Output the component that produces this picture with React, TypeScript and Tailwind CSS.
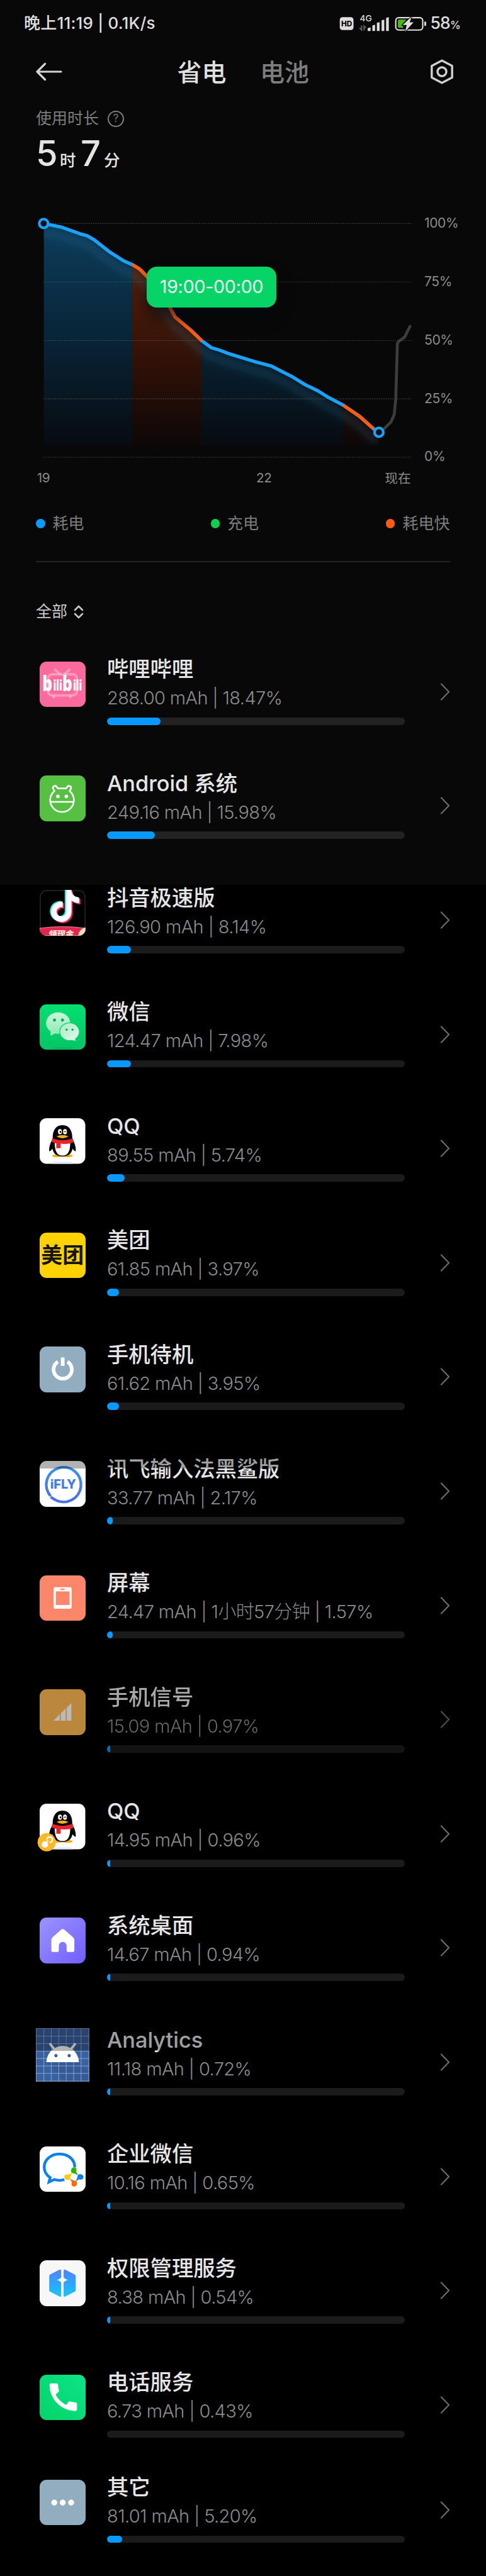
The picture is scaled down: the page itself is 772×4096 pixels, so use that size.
import React from "react";
import { FaTiktok } from "react-icons/fa6";

type AppItem = {
    name: string;
    usage: string;
    percent: number;
    icon: React.ReactNode;
    track?: string;
    dimmed?: boolean;
    shade?: string;
    rowHeight?: string;
};

const tile = "h-[72.5px] w-[72.5px] overflow-hidden rounded-[11px]";

function BilibiliIcon() {
    return (
        <svg viewBox="0 0 100 100" className={`${tile} bg-[#fb6a9d]`}>
            <g stroke="#fff" strokeOpacity="0.32" strokeWidth="5.5" fill="none" strokeLinecap="round">
                <rect x="18.5" y="28" width="63" height="46" rx="9" />
                <path d="M34 18l9 8M65 18l-9 8M31 77v1M67 77v1" />
            </g>
            <g fill="#fff" fontFamily="Open Sans" fontWeight="800">
                <text transform="translate(6 64.5) scale(0.74 1)" fontSize="46">b</text>
                <text transform="translate(29.5 63) scale(0.66 1)" fontSize="31">ili</text>
                <text transform="translate(49.5 64.5) scale(0.74 1)" fontSize="46">b</text>
                <text transform="translate(73 63) scale(0.66 1)" fontSize="31">ili</text>
            </g>
        </svg>
    );
}

function AndroidIcon() {
    return (
        <svg viewBox="0 0 100 100" className={`${tile} bg-[#55c041]`}>
            <path
                d="M32.4 34L29.5 29.5Q28 24.5 32.5 23Q37 22 38.5 27L40 28.5H58L59.5 27Q61 22 65.5 23Q70 24.5 68.5 29.5L65.6 34A26 26 0 1 1 32.4 34ZM23.5 58H74.5"
                fill="none"
                stroke="#fff"
                strokeWidth="3.6"
                strokeLinejoin="round"
            />
            <circle cx="40" cy="46" r="4" fill="#fff" />
            <circle cx="58.5" cy="46" r="4" fill="#fff" />
        </svg>
    );
}

function DouyinIcon() {
    return (
        <div className={`${tile} relative bg-black ring-2 ring-inset ring-[#1e1e1e]`}>
            <FaTiktok className="absolute -top-px left-[13px] text-[#25e6e0]" size={51} />
            <FaTiktok className="absolute top-[2px] left-[17px] text-[#f8245c]" size={51} />
            <FaTiktok className="absolute top-0 left-[15px] text-white" size={51} />
            <svg viewBox="0 0 100 100" className="absolute inset-0 h-full w-full">
                <path d="M0 84Q50 77 100 84V100H0Z" fill="#e9234f" stroke="#f7c9b4" strokeWidth="1" />
                <path d="M84 100Q86 87 100 82V92Q94 99 90 100Z" fill="#fbe0b0" />
                <text x="19" y="103" fontSize="18.5" fontWeight="900" fontFamily="Noto Sans CJK SC" fill="#ffe9d8" transform="skewX(-8) translate(14 0)">领现金</text>
            </svg>
        </div>
    );
}

function WechatIcon() {
    return (
        <svg viewBox="0 0 100 100" className={`${tile} bg-linear-to-b from-[#05df70] to-[#05c565]`}>
            <defs>
                <linearGradient id="bubble" x1="0" y1="0" x2="0" y2="1">
                    <stop offset="0" stopColor="#c9f6dc" />
                    <stop offset="1" stopColor="#8eeab6" />
                </linearGradient>
                <linearGradient id="bubbleSmall" x1="0" y1="0" x2="1" y2="1">
                    <stop offset="0" stopColor="#a7edc4" />
                    <stop offset="1" stopColor="#e3faec" />
                </linearGradient>
            </defs>
            <ellipse cx="40.5" cy="41" rx="26.5" ry="23.5" fill="url(#bubble)" />
            <path d="M24 58L24 69L36 62Z" fill="#9eedc0" />
            <ellipse cx="65.5" cy="60" rx="21.5" ry="19.5" fill="url(#bubbleSmall)" stroke="#07cf69" strokeWidth="1.6" />
            <path d="M69 78L79 80L76 71Z" fill="#dcf9e8" />
            <g fill="#0aa557">
                <circle cx="32.5" cy="34.5" r="3.3" />
                <circle cx="50" cy="34.5" r="3.3" />
                <circle cx="59" cy="55.5" r="2.3" />
                <circle cx="72" cy="55.5" r="2.3" />
            </g>
            <rect x="30" y="94" width="41" height="4" rx="1" fill="#0ab65c" />
        </svg>
    );
}

function QQIcon({ badge }: { badge?: boolean }) {
    return (
        <svg viewBox="0 0 100 100" className="h-[72.5px] w-[72.5px] overflow-visible">
            <rect width="100" height="100" rx="15" fill="#fff" />
            <path d="M31 96H70L72 100H29Z" fill="#dfe6f5" />
            <ellipse cx="38" cy="82.5" rx="10.5" ry="3.2" fill="#f7ab12" />
            <ellipse cx="61.5" cy="82.5" rx="10.5" ry="3.2" fill="#f7ab12" />
            <path d="M28.5 45C28 27 35 15 50 15S72 27 71.5 45C77 55 80 64 79 72C77 74 74 69 72 67C70 78 62 84 50 84S30 78 28 67C26 69 23 74 21 72C20 64 23 55 28.5 45Z" fill="#000" />
            <path d="M33 54C33 74 39 82 50 82S67 74 67 54Z" fill="#fff" />
            <path d="M27.5 44Q50 53 72.5 44L74 53Q60 58 46 56V66H36.5V55L26 52Z" fill="#e8242b" />
            <ellipse cx="44.5" cy="29.5" rx="4.3" ry="5.8" fill="#fff" />
            <ellipse cx="55.5" cy="29.5" rx="4.3" ry="5.8" fill="#fff" />
            <ellipse cx="45.5" cy="30" rx="1.7" ry="2.4" fill="#000" />
            <path d="M53 30.5Q55.5 27.5 58 30" fill="none" stroke="#000" strokeWidth="1.5" />
            <path d="M37 40Q50 34 63 40Q57 44 50 44T37 40Z" fill="#f9ae15" />
            {badge && (
                <g>
                    <circle cx="15.5" cy="84.5" r="20" fill="#ffb727" />
                    <circle cx="11.5" cy="89.5" r="7" fill="#fff" />
                    <path d="M16 77.5A6 6 0 1 1 22.5 85" fill="none" stroke="#fff" strokeWidth="3.2" strokeLinecap="round" />
                    <circle cx="17" cy="82" r="2" fill="#fff" />
                </g>
            )}
        </svg>
    );
}

function MeituanIcon() {
    return (
        <div className={`${tile} flex items-center justify-center bg-[#ffd203] font-['Noto_Sans_CJK_SC',sans-serif] text-[34px] leading-none font-bold text-[#151515]`}>
            <span className="-mt-1 whitespace-nowrap">美团</span>
        </div>
    );
}

function PowerIcon() {
    return (
        <svg viewBox="0 0 100 100" className={`${tile} bg-[#92adbf]`}>
            <path d="M40 33.5A20 20 0 1 0 61 33.5" fill="none" stroke="#fff" strokeWidth="8" />
            <rect x="46.5" y="24" width="8" height="18.5" fill="#fff" />
        </svg>
    );
}

function IflyIcon() {
    return (
        <svg viewBox="0 0 100 100" className={`${tile} bg-white`}>
            <defs>
                <linearGradient id="ifly" x1="0" y1="0" x2="0" y2="1">
                    <stop offset="0" stopColor="#3d92ee" />
                    <stop offset="1" stopColor="#4a6fe8" />
                </linearGradient>
            </defs>
            <path d="M24 77A38 38 0 1 1 33 84.5L24 79" fill="none" stroke="url(#ifly)" strokeWidth="6" />
            <text x="23" y="60" fontSize="27" fontWeight="800" fontFamily="Inter" textLength="57" lengthAdjust="spacingAndGlyphs" fill="#3f7cea">iFLY</text>
        </svg>
    );
}

function ScreenIcon() {
    return (
        <svg viewBox="0 0 100 100" className={`${tile} bg-[#fb866a]`}>
            <rect x="30.5" y="26" width="39.5" height="47" rx="3" fill="#fff" />
            <rect x="35.5" y="35" width="30" height="30" fill="#fb866a" />
            <rect x="45" y="29" width="10" height="3" rx="1.5" fill="#fb866a" />
        </svg>
    );
}

function SignalIcon() {
    return (
        <svg viewBox="0 0 100 100" className={`${tile} bg-[#ffb954]`}>
            <path d="M30 69L44 55V69ZM46.5 53L57 42V69H46.5ZM59.5 40L69.5 30.5V69H59.5Z" fill="#fff" />
        </svg>
    );
}

function HomeIcon() {
    return (
        <svg viewBox="0 0 100 100" className={`${tile} bg-linear-to-br from-[#9a93ff] to-[#745cfb]`}>
            <path d="M47 26.5Q50.5 23.5 54 26.5L73 43Q76 46 76 49V72Q76 75.5 72.5 75.5H62.5Q59 75.5 59 72V62A8.5 8.5 0 0 0 42 62V72Q42 75.5 38.5 75.5H29Q25.5 75.5 25.5 72V49Q25.5 46 28.5 43Z" fill="#fff" />
        </svg>
    );
}

function AnalyticsIcon() {
    const lines = [0.5, 15, 29, 43, 57, 71, 85, 99.5];
    return (
        <svg viewBox="0 0 100 100" className="h-[84.5px] w-[84.5px] bg-[#3a619f]">
            <path d="M20 64H81L100 83V100H54Z" fill="#2f548e" opacity="0.5" />
            <g stroke="#9bbcdc" strokeWidth="0.9">
                {lines.map((p) => (
                    <path key={p} d={`M${p} 0V100M0 ${p}H100`} />
                ))}
            </g>
            <path d="M27 30L36 41M73.5 30L64.5 41" stroke="#fff" strokeWidth="4.5" strokeLinecap="round" />
            <path d="M19.5 64C21 46 34 33.5 50.3 33.5S79.5 46 81 64Z" fill="#fff" />
            <circle cx="37.7" cy="51.5" r="3" fill="#3a619f" />
            <circle cx="62.6" cy="51.5" r="3" fill="#3a619f" />
        </svg>
    );
}

function WecomIcon() {
    const drop = "M0 -7C4.5 -7 6.5 -3 5.5 0C4.5 4 8 8 11 11C6 9 2 6 -2 6C-6 5 -7 1 -6 -2C-5 -5 -3 -7 0 -7Z";
    return (
        <svg viewBox="0 0 100 100" className={`${tile} bg-white`}>
            <path d="M77 46C77 28 62 16.5 43.5 16.5S10 29 10 45C10 55 15 63 23 68L20.5 78L32 72.5C39 75 47 74.5 54 72.5" fill="none" stroke="#0a82ec" strokeWidth="6" />
            <path d={drop} transform="translate(75 53)" fill="#2fb409" />
            <path d={drop} transform="translate(89 67) rotate(90)" fill="#0a82ec" />
            <path d={drop} transform="translate(75.5 81) rotate(180)" fill="#fb6a0c" />
            <path d={drop} transform="translate(61 67) rotate(270)" fill="#fdca11" />
        </svg>
    );
}

function PermissionIcon() {
    return (
        <svg viewBox="0 0 100 100" className={`${tile} bg-[#f7f7f8]`}>
            <defs>
                <linearGradient id="perm" x1="0" y1="0" x2="0" y2="1">
                    <stop offset="0" stopColor="#5184ff" />
                    <stop offset="0.5" stopColor="#2ea4ff" />
                    <stop offset="1" stopColor="#12c8fb" />
                </linearGradient>
            </defs>
            <path d="M44 20.5Q47 19.5 47 23V78Q47 81 44 79.5L23 69Q21 68 21 65V35Q21 32 23 31ZM55.5 20.5Q52.5 19.5 52.5 23V78Q52.5 81 55.5 79.5L76.5 69Q79 68 79 65V35Q79 32 76.5 31Z" fill="url(#perm)" />
            <path d="M49.7 30Q51 41 62 43Q51 45 49.7 56Q48.5 45 38 43Q48.5 41 49.7 30Z" fill="#fff" />
        </svg>
    );
}

function PhoneIcon() {
    return (
        <svg viewBox="0 0 100 100" className={`${tile} bg-linear-to-bl from-[#0de488] to-[#04d368]`}>
            <path
                transform="translate(11.5 9) scale(3.35)"
                d="M20.01 15.38c-1.23 0-2.42-.2-3.53-.56a.977.977 0 0 0-1.01.24l-1.57 1.97c-2.83-1.35-5.48-3.9-6.89-6.83l1.95-1.66c.27-.28.35-.67.24-1.02-.37-1.11-.56-2.3-.56-3.53 0-.54-.45-.99-.99-.99H4.19C3.65 3 3 3.24 3 3.99 3 13.28 10.73 21 20.01 21c.71 0 .99-.63.99-1.18v-3.45c0-.54-.45-.99-.99-.99z"
                fill="#fff"
            />
        </svg>
    );
}

function OtherIcon() {
    return (
        <svg viewBox="0 0 100 100" className={`${tile} bg-[#92adbf]`}>
            <circle cx="32" cy="50" r="6.5" fill="#fff" />
            <circle cx="50.5" cy="50" r="6.5" fill="#fff" />
            <circle cx="69" cy="50" r="6.5" fill="#fff" />
        </svg>
    );
}

const apps: AppItem[] = [
    { name: "哔哩哔哩", usage: "288.00 mAh | 18.47%", percent: 18.47, icon: <BilibiliIcon />, track: "bg-[#222222]" },
    { name: "Android 系统", usage: "249.16 mAh | 15.98%", percent: 15.98, icon: <AndroidIcon />, track: "bg-[#222222]" },
    { name: "抖音极速版", usage: "126.90 mAh | 8.14%", percent: 8.14, icon: <DouyinIcon /> },
    { name: "微信", usage: "124.47 mAh | 7.98%", percent: 7.98, icon: <WechatIcon /> },
    { name: "QQ", usage: "89.55 mAh | 5.74%", percent: 5.74, icon: <QQIcon /> },
    { name: "美团", usage: "61.85 mAh | 3.97%", percent: 3.97, icon: <MeituanIcon /> },
    { name: "手机待机", usage: "61.62 mAh | 3.95%", percent: 3.95, icon: <PowerIcon /> },
    { name: "讯飞输入法黑鲨版", usage: "33.77 mAh | 2.17%", percent: 2.17, icon: <IflyIcon />, shade: "h-[22.5px]" },
    { name: "屏幕", usage: "24.47 mAh | 1小时57分钟 | 1.57%", percent: 1.57, icon: <ScreenIcon /> },
    { name: "手机信号", usage: "15.09 mAh | 0.97%", percent: 0.97, icon: <SignalIcon />, dimmed: true },
    { name: "QQ", usage: "14.95 mAh | 0.96%", percent: 0.96, icon: <QQIcon badge /> },
    { name: "系统桌面", usage: "14.67 mAh | 0.94%", percent: 0.94, icon: <HomeIcon /> },
    { name: "Analytics", usage: "11.18 mAh | 0.72%", percent: 0.72, icon: <AnalyticsIcon />, shade: "h-[41px]" },
    { name: "企业微信", usage: "10.16 mAh | 0.65%", percent: 0.65, icon: <WecomIcon /> },
    { name: "权限管理服务", usage: "8.38 mAh | 0.54%", percent: 0.54, icon: <PermissionIcon /> },
    { name: "电话服务", usage: "6.73 mAh | 0.43%", percent: 0.43, icon: <PhoneIcon />, rowHeight: "h-[167px]" },
    { name: "其它", usage: "81.01 mAh | 5.20%", percent: 5.2, icon: <OtherIcon /> },
];

function AppRow({ item }: { item: AppItem }) {
    return (
        <li className={`relative flex items-start pr-[57px] pl-[57px] ${item.rowHeight ?? "h-[181.6px]"} ${item.dimmed ? "opacity-[0.73]" : ""}`}>
            <div className="mt-[5px] flex h-[84.5px] w-[84.5px] shrink-0 items-center justify-center">{item.icon}</div>
            <div className="ml-[28.5px] w-[473px] pt-[3.5px]">
                <h3 className="h-10 text-[34.3px] leading-10 font-medium whitespace-nowrap text-[#e6e6e6]">{item.name}</h3>
                <p className="mt-[9px] h-[34px] text-[29px] leading-[34px] font-light tracking-[-0.6px] whitespace-nowrap text-[#8c8c8c]">{item.usage}</p>
                <div className={`mt-[13.5px] h-[11.7px] overflow-hidden rounded-full ${item.track ?? "bg-[#1b1b1b]"}`}>
                    <div className="h-full rounded-full bg-[#0998fb]" style={{ width: `${Math.round(item.percent)}%` }} />
                </div>
            </div>
            <svg viewBox="0 0 16 28" className="mt-[45px] ml-auto h-7 w-4" fill="none" stroke="#6a6a6a" strokeWidth="2.2" strokeLinecap="round">
                <path d="M2 1.5L14 14L2 26.5" />
            </svg>
            {item.shade && <div className={`absolute inset-x-0 top-0 bg-black/30 ${item.shade}`} />}
        </li>
    );
}

function StatusBar() {
    return (
        <div className="flex h-[73px] items-center justify-between pr-[41px] pl-[38px] text-[#dedede]">
            <span className="text-[26px] font-medium tracking-[0.2px]">晚上11:19 | 0.1K/s</span>
            <div className="flex items-center">
                <svg viewBox="756 30 194 42" className="h-[30px] w-[138.6px]">
                    <rect x="757" y="37.5" width="30.5" height="28.5" rx="6" fill="#dedede" />
                    <text x="772.2" y="58" fontSize="16.5" fontWeight="800" fontFamily="Inter" textAnchor="middle" fill="#0a0a0a">HD</text>
                    <text x="801.5" y="47.5" fontSize="19" fontWeight="500" fontFamily="Inter" textLength="27" lengthAdjust="spacingAndGlyphs" fill="#dedede">4G</text>
                    <path d="M805.5 56V66L801 61.5M811 67V57L815 61" fill="none" stroke="#5c5c5c" strokeWidth="3" />
                    <path d="M819 62L825.5 60V68H819ZM829.5 56L835.5 54V68H829.5ZM839.5 50L845.5 48.5V68H839.5ZM850 44.5L856 43V68H850ZM860 39L866 37.5V68H860Z" fill="#dedede" />
                    <rect x="881.5" y="38.5" width="60" height="27.5" rx="6.5" fill="none" stroke="#dedede" strokeWidth="3" />
                    <path d="M889 42.5H905L895.5 54L899 61H889Q886 61 886 58V45.5Q886 42.5 889 42.5Z" fill="#4bb51c" />
                    <path d="M917 36L897 55H906L902 70L921 49H912.5Z" fill="#dedede" stroke="#080808" strokeWidth="3" paintOrder="stroke" />
                    <rect x="945" y="47" width="4" height="10" rx="1.5" fill="#dedede" />
                </svg>
                <span className="ml-[6px] text-[26.5px] leading-none font-medium tracking-[-0.8px]">
                    58<span className="text-[17px]">%</span>
                </span>
            </div>
        </div>
    );
}

function BatteryChart() {
    const grid = [
        { y: 97, label: "100%" },
        { y: 227, label: "75%" },
        { y: 357.3, label: "50%" },
        { y: 487, label: "25%" },
        { y: 617, label: "0%" },
    ];
    const curve = "M97 97L138 105.5L178 120L193 124L209 133L244.5 161L275.5 180.5L294 188.5L310 198L326 214L352 247L377.5 284L389 305L423.5 334L448.5 358L470 373.5L486 378L510 387L565 404L602.5 414L647 436.5L678 455.5L706 469L730 484L762.5 501L799 526L830 553.5L842 561.5";
    return (
        <div className="relative">
            <svg viewBox="0 0 1080 700" className="block h-[500.4px] w-[772px]" fontFamily="Inter, 'Noto Sans CJK SC', sans-serif">
                <defs>
                    <linearGradient id="blueFill" gradientUnits="userSpaceOnUse" x1="0" y1="97" x2="0" y2="592">
                        <stop offset="0" stopColor="#0c3d5c" />
                        <stop offset="0.5" stopColor="#092538" />
                        <stop offset="1" stopColor="#070b10" />
                    </linearGradient>
                    <linearGradient id="redFill" gradientUnits="userSpaceOnUse" x1="0" y1="188" x2="0" y2="592">
                        <stop offset="0" stopColor="#54200b" />
                        <stop offset="0.5" stopColor="#331207" />
                        <stop offset="1" stopColor="#0d0707" />
                    </linearGradient>
                    <clipPath id="under">
                        <path d={`${curve}V592H97Z`} />
                    </clipPath>
                    <filter id="soft" x="-10%" y="-10%" width="120%" height="120%">
                        <feGaussianBlur stdDeviation="8" />
                    </filter>
                </defs>
                <g clipPath="url(#under)">
                    <rect x="97" y="90" width="197" height="502" fill="url(#blueFill)" />
                    <rect x="294" y="90" width="154" height="502" fill="url(#redFill)" />
                    <rect x="448" y="90" width="315" height="502" fill="url(#blueFill)" />
                    <rect x="763" y="90" width="80" height="502" fill="url(#redFill)" />
                    <path d={curve} transform="translate(-3 20)" fill="none" stroke="#2a7899" strokeOpacity="0.22" strokeWidth="18" filter="url(#soft)" />
                </g>
                {grid.map((g) => (
                    <g key={g.label}>
                        <path d={`M97 ${g.y}H914`} stroke="#8a8a8a" strokeOpacity="0.45" strokeWidth="1.5" strokeDasharray="2.5 2.5" />
                        <text x="943" y={g.y + 9} fontSize="29.5" letterSpacing="-0.6" fill="#8a8a8a">{g.label}</text>
                    </g>
                ))}
                <g fontSize="29" fill="#8a8a8a" textAnchor="middle">
                    <text x="96.5" y="673.5" letterSpacing="-0.6">19</text>
                    <text x="586.5" y="673.5" letterSpacing="-0.6">22</text>
                    <text x="884" y="674">现在</text>
                </g>
                <path d="M842 561.5L854 553L869 538.5L876 522L879.5 487.5L883 364L886 359.5L899 350L904 340L911 326" fill="none" stroke="#3d3d3d" strokeWidth="6.5" strokeLinejoin="round" strokeLinecap="round" />
                <path d={curve} fill="none" stroke="#1ba2f6" strokeWidth="7.5" strokeLinejoin="round" />
                <path d="M294 188.5L310 198L326 214L352 247L377.5 284L389 305L423.5 334L448.5 358M762.5 501L799 526L830 553.5" fill="none" stroke="#fb5c10" strokeWidth="7.5" strokeLinejoin="round" />
                <circle cx="97" cy="97" r="9.8" fill="#061019" stroke="#1ba2f6" strokeWidth="5.8" />
                <circle cx="842" cy="561.5" r="9.8" fill="#061019" stroke="#1ba2f6" strokeWidth="5.8" />
            </svg>
            <div className="absolute top-[138px] left-[233px] flex h-[64.5px] w-[206px] items-center justify-center rounded-2xl bg-[#07d467] text-[28.5px] tracking-[-0.2px] text-[#effff5] shadow-[0_14px_24px_rgba(0,8,18,0.6)]">
                19:00-00:00
            </div>
        </div>
    );
}

function Legend() {
    return (
        <div className="flex h-[92px] items-center justify-between pr-[57.5px] pl-[57px] text-[25px] text-[#7c7c7c]">
            <div className="flex w-[277.5px] items-center gap-[12px]">
                <i className="h-[14.5px] w-[14.5px] rounded-full bg-[#0c9bfb]" />
                耗电
            </div>
            <div className="flex grow items-center gap-[12px]">
                <i className="h-[14.5px] w-[14.5px] rounded-full bg-[#0fcf50]" />
                充电
            </div>
            <div className="flex items-center gap-[12px]">
                <i className="h-[14.5px] w-[14.5px] rounded-full bg-[#fb5c10]" />
                耗电快
            </div>
        </div>
    );
}

export default function App() {
    return (
        <main className="h-[4096px] w-[772px] overflow-hidden bg-[linear-gradient(#080808_1407px,#000_1407px)] font-['Inter','Noto_Sans_CJK_SC',sans-serif]">
            <StatusBar />
            <header className="flex h-[82px] items-center pr-[51px] pl-[57px]">
                <svg viewBox="0 0 42 30" className="h-[30px] w-[42px]" fill="none" stroke="#d4d4d4" strokeWidth="3.2" strokeLinecap="round" strokeLinejoin="round">
                    <path d="M14.5 2.5L2 15L14.5 27.5M2 15H40" />
                </svg>
                <nav className="ml-[182.5px] flex gap-[53.5px] text-[39px] leading-none font-medium">
                    <span className="text-[#e0e0e0]">省电</span>
                    <span className="text-[#7d7d7d]">电池</span>
                </nav>
                <svg viewBox="0 0 38 40" className="ml-auto h-10 w-[38px]" fill="none" stroke="#d0d0d0" strokeWidth="3.4" strokeLinejoin="round">
                    <path d="M19 2.3L35.2 10.8V29.2L19 37.7L2.8 29.2V10.8Z" />
                    <circle cx="19" cy="20" r="7" />
                </svg>
            </header>
            <section className="h-[131px] pt-[15px] pl-[57px]">
                <div className="flex h-[37px] items-center gap-[14px] text-[25px] text-[#7c7c7c]">
                    使用时长
                    <span className="flex h-[26px] w-[26px] items-center justify-center rounded-full border-2 border-[#7c7c7c] text-[17px] leading-none">?</span>
                </div>
                <div className="mt-[8px] flex items-baseline leading-[58px] font-medium text-[#e4e4e4]">
                    <span className="w-[38px] text-[56px]">5</span>
                    <span className="w-[33px] text-[25.5px]">时</span>
                    <span className="w-[37px] text-[56px]">7</span>
                    <span className="text-[25.5px]">分</span>
                </div>
            </section>
            <BatteryChart />
            <Legend />
            <div className="mx-[57px] mt-[14px] h-[1.5px] bg-[#232323]" />
            <div className="flex h-[147px] items-center gap-[10px] pt-[11px] pl-[57px] text-[25px] text-[#c8c8c8]">
                全部
                <svg viewBox="0 0 16 22" className="h-[22px] w-4" fill="none" stroke="#c8c8c8" strokeWidth="2.6" strokeLinecap="round" strokeLinejoin="round">
                    <path d="M2 8L8 2L14 8M2 14L8 20L14 14" />
                </svg>
            </div>
            <ul>
                {apps.map((item, i) => (
                    <AppRow key={i} item={item} />
                ))}
            </ul>
        </main>
    );
}
